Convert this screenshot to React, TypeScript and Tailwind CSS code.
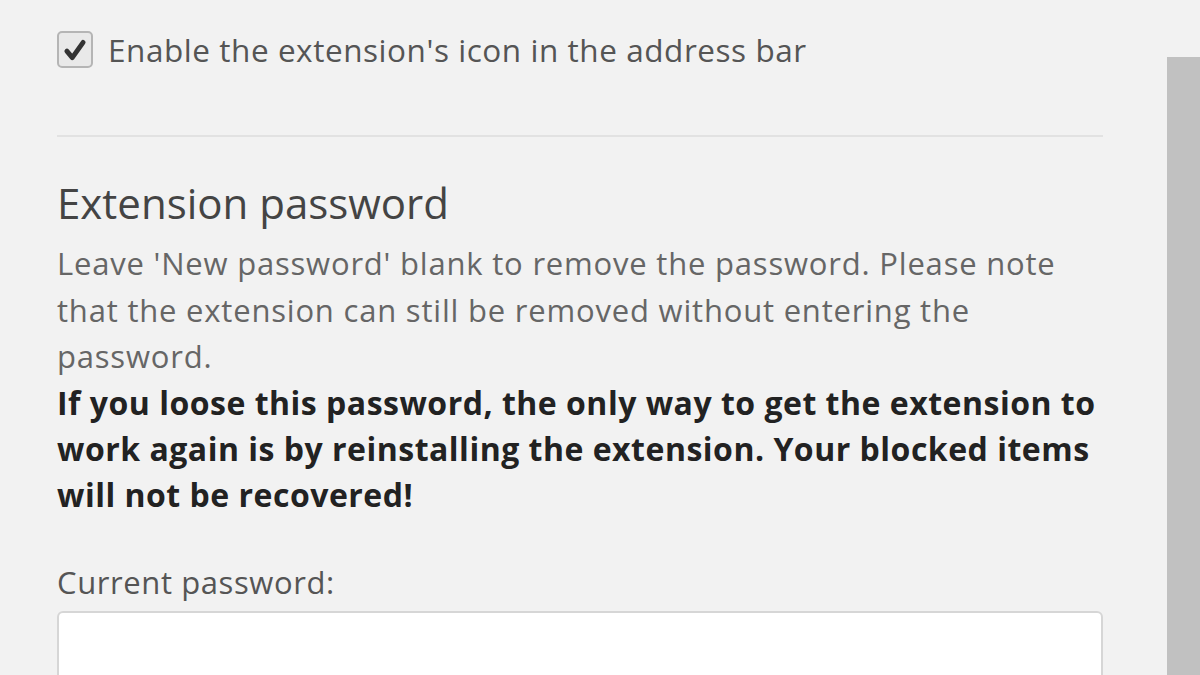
import React from 'react';

const App = () => {
    return (
        <div className="w-[1200px] h-[675px] overflow-hidden bg-[#f2f2f2] flex" style={{ fontFamily: '"Open Sans", "Noto Sans", sans-serif' }}>
            <div className="w-[1046px] ml-[57px] shrink-0">
                {/* Address bar option */}
                <label className="flex items-center gap-[15px] h-[37px] mt-[31px]">
                    <span className="w-[36px] h-[37px] rounded-[5px] border-2 border-[#b5b5b5] bg-[#e9e9e9] flex items-center justify-center">
                        <svg viewBox="0 0 24 24" className="w-[26px] h-[26px]">
                            <path d="M4.5 13 L9.5 19 L19.5 5" fill="none" stroke="#333" strokeWidth="4.5" strokeLinecap="round" strokeLinejoin="round" />
                        </svg>
                    </span>
                    <span className="text-[31.5px] text-[#555] leading-none tracking-[0.55px]">Enable the extension's icon in the address bar</span>
                </label>

                <div className="h-[2px] bg-[#e2e2e2] mt-[67px]" />

                <h2 className="text-[42px] text-[#444] leading-[50px] mt-[41px]">Extension password</h2>

                <p className="text-[31px] text-[#666] leading-[46.5px] mt-[12px] tracking-[0.8px]">
                    Leave 'New password' blank to remove the password. Please note that the extension can still be removed without entering the password.
                </p>
                <p className="text-[32px] text-[#222] font-bold leading-[46px] tracking-[0.5px]">
                    If you loose this password, the only way to get the extension to work again is by reinstalling the extension. Your blocked items will not be recovered!
                </p>

                <div className="text-[31px] text-[#555] leading-[40px] mt-[44px] tracking-[0.6px]">Current password:</div>
                <div className="h-[100px] mt-[9px] bg-white border-2 border-[#d6d6d6] rounded-[6px]" />
            </div>

            {/* Scrollbar */}
            <div className="ml-[64px] w-[33px] pt-[57px]">
                <div className="h-[700px] bg-[#c1c1c1]" />
            </div>
        </div>
    );
};

export default App;
